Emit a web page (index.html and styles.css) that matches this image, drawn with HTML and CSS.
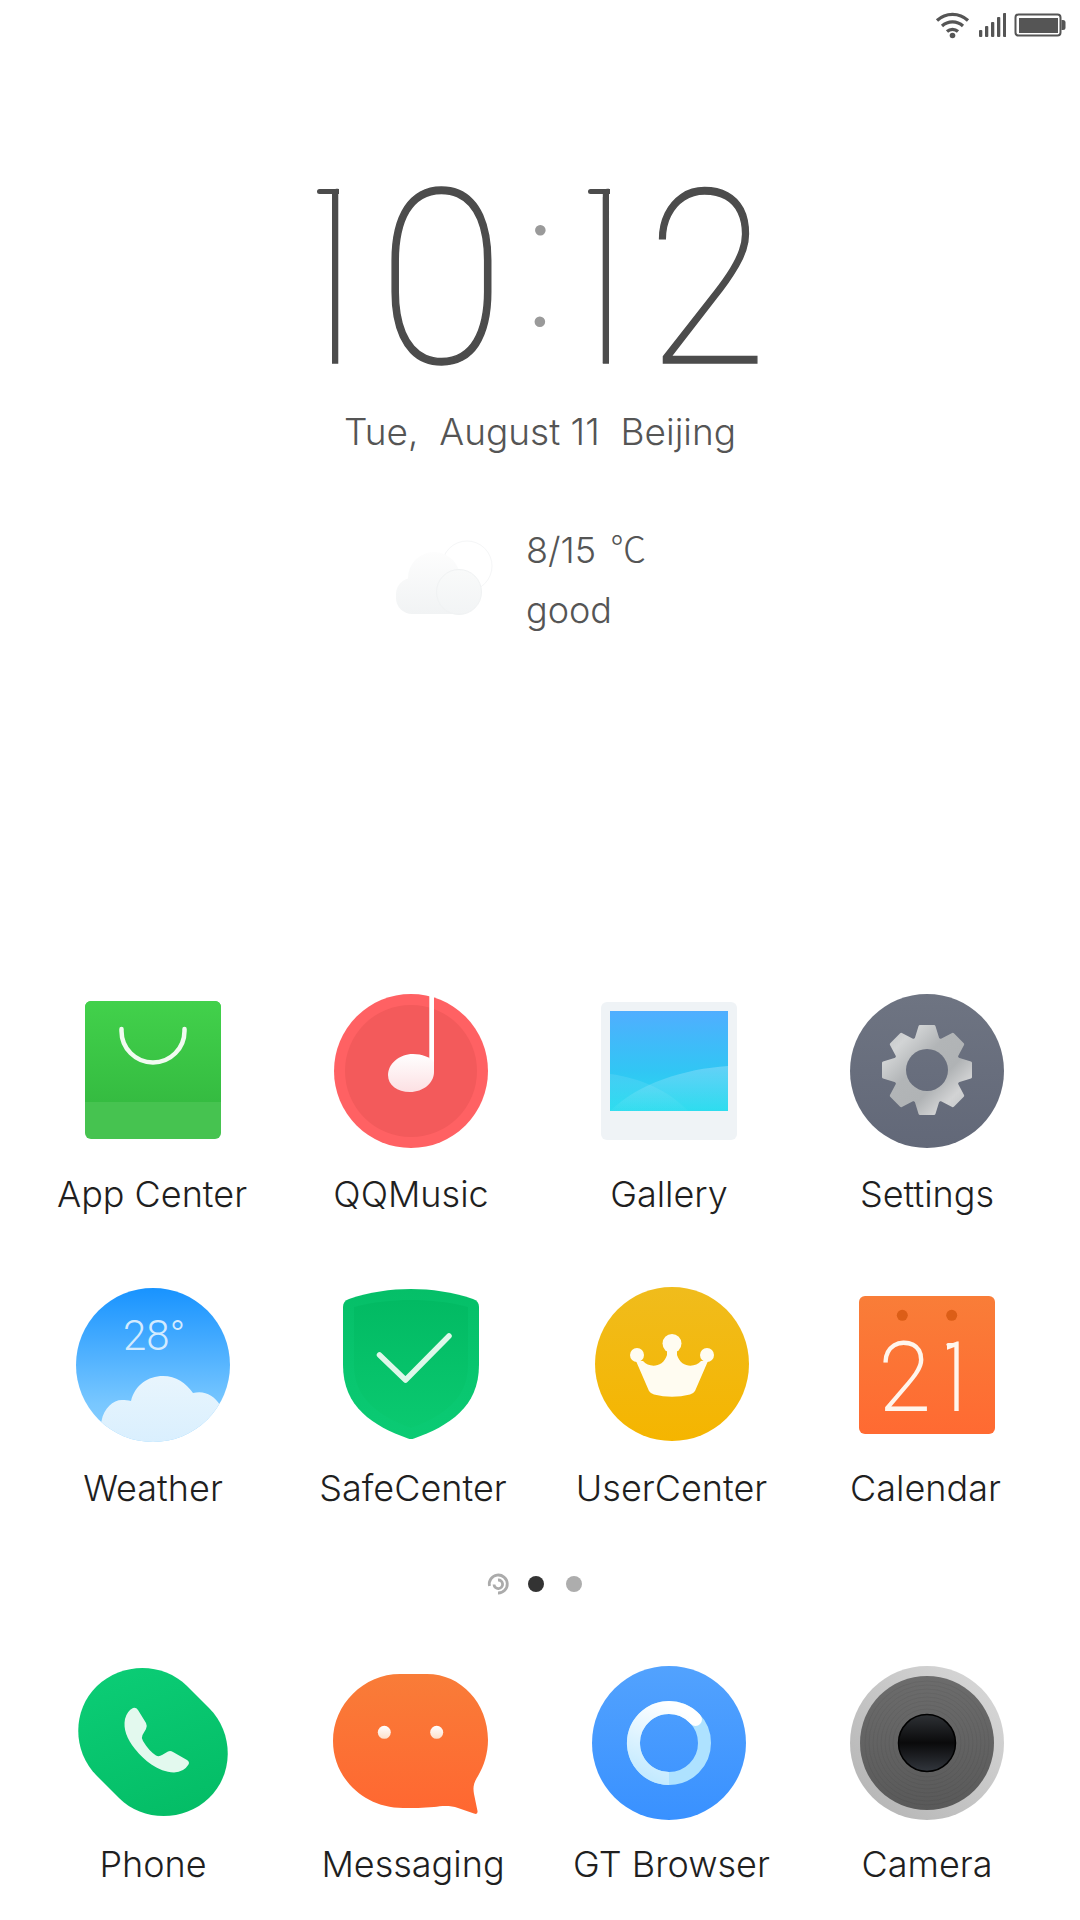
FILE: index.html
```html
<!doctype html>
<html lang="en">
<head>
<meta charset="utf-8">
<title>Home screen</title>
<link rel="stylesheet" href="styles.css">
</head>
<body>
<main class="screen">
  <header class="status">
    <svg class="st-wifi" width="36" height="28" viewBox="0 0 36 28"><g fill="none" stroke="#555" stroke-width="3.2"><path d="M2 9.5a22.5 22.5 0 0 1 31 0"/><path d="M7 15a15.5 15.5 0 0 1 21 0"/><path d="M12 20.5a8 8 0 0 1 11 0"/></g><circle cx="17.5" cy="24.5" r="2.8" fill="#555"/></svg>
    <svg class="st-signal" width="27" height="28" viewBox="0 0 27 28"><g fill="#555"><rect x="0" y="18" width="3.3" height="7" rx="1"/><rect x="6" y="14" width="3.3" height="11" rx="1"/><rect x="12" y="10" width="3.3" height="15" rx="1"/><rect x="18" y="5" width="3.3" height="20" rx="1"/><rect x="24" y="1" width="3.3" height="24" rx="1"/></g></svg>
    <svg class="st-batt" width="52" height="28" viewBox="0 0 52 28"><rect x="1.5" y="2.5" width="45" height="21" rx="3" fill="none" stroke="#555" stroke-width="2"/><rect x="5" y="6" width="39" height="15" fill="#555"/><path d="M47.5 8h1.5a2.5 2.5 0 0 1 2.500 2.500v5a2.500 2.500 0 0 1-2.500 2.500h-1.500z" fill="#555"/></svg>
  </header>

  <section class="clock">
    <span class="digit one"><span class="one-glyph">1</span></span>
    <span class="digit zero">0</span>
    <span class="colon">:</span>
    <span class="digit one second"><span class="one-glyph">1</span></span>
    <span class="digit two">2</span>
  </section>

  <p class="date">Tue,  August 11  Beijing</p>

  <section class="weather">
    <svg class="cloud" width="100" height="80" viewBox="0 0 100 80">
      <defs>
        <linearGradient id="cl" gradientUnits="userSpaceOnUse" x1="0" y1="12" x2="0" y2="74"><stop offset="0" stop-color="#fdfdfd"/><stop offset="1" stop-color="#f1f3f4"/></linearGradient>
        <linearGradient id="clf" x1="0" y1="0" x2="0" y2="1"><stop offset="0" stop-color="#f9fafa"/><stop offset="1" stop-color="#f2f4f5"/></linearGradient>
      </defs>
      <circle cx="71" cy="26" r="25" fill="#fff" stroke="#f5f6f7" stroke-width="1"/>
      <g fill="url(#cl)"><circle cx="38" cy="38" r="26"/><rect x="0" y="38" width="80" height="36" rx="16"/></g>
      <circle cx="63" cy="52" r="22.500" fill="url(#clf)" stroke="#f0f2f3" stroke-width="1"/>
    </svg>
    <div class="weather-text">
      <p>8/15 <span class="celsius">℃</span></p>
      <p>good</p>
    </div>
  </section>

  <section class="grid apps">
    <a class="app">
      <svg class="icon" viewBox="0 0 160 160"><defs>
        <linearGradient id="g1" x1="0" y1="0" x2="0" y2="1"><stop offset="0" stop-color="#42d14b"/><stop offset="1" stop-color="#35bc41"/></linearGradient></defs>
        <rect x="12" y="10" width="136" height="138" rx="6" fill="#46c350"/>
        <path d="M12 16a6 6 0 0 1 6-6h124a6 6 0 0 1 6 6v95H12z" fill="url(#g1)"/>
        <path d="M48.500 38v2a31.500 31.500 0 0 0 63 0v-2" fill="none" stroke="#f1fbf1" stroke-width="4.500" stroke-linecap="round"/>
      </svg>
      <span class="label low">App Center</span>
    </a>
    <a class="app">
      <svg class="icon" viewBox="0 0 160 160"><defs>
        <linearGradient id="g2" x1="0" y1="0" x2="0" y2="1"><stop offset="0" stop-color="#fff"/><stop offset="1" stop-color="#fce0e3"/></linearGradient></defs>
        <circle cx="80" cy="80" r="77" fill="#ff6163"/>
        <circle cx="80" cy="80" r="66" fill="#f35a5b"/>
        <rect x="98.300" y="5" width="4.700" height="76" fill="#fff"/>
        <path d="M103 81c0 11-11 20-24 20c-13 0-22-7-22-17c0-11 11-21 25-21c9 0 17 3 21 8z" fill="url(#g2)"/>
      </svg>
      <span class="label">QQMusic</span>
    </a>
    <a class="app">
      <svg class="icon" viewBox="0 0 160 160"><defs>
        <linearGradient id="g3" x1="0" y1="0" x2="0" y2="1"><stop offset="0" stop-color="#50aeff"/><stop offset=".6" stop-color="#31c6f4"/><stop offset="1" stop-color="#27dcee"/></linearGradient>
        <linearGradient id="g3w" x1="0" y1="0" x2="0" y2="1"><stop offset="0" stop-color="#fff" stop-opacity=".24"/><stop offset="1" stop-color="#fff" stop-opacity=".03"/></linearGradient>
        <linearGradient id="g3v" x1="0" y1="0" x2="0" y2="1"><stop offset="0" stop-color="#fff" stop-opacity=".1"/><stop offset="1" stop-color="#fff" stop-opacity=".03"/></linearGradient></defs>
        <rect x="12" y="11" width="136" height="138" rx="6" fill="#eff3f6"/>
        <rect x="21" y="20" width="118" height="100" fill="url(#g3)"/>
        <path d="M21 83C52 87 80 100 99 120H21z" fill="url(#g3v)"/>
        <path d="M21 120C50 92 95 78 139 75V120z" fill="url(#g3w)"/>
      </svg>
      <span class="label">Gallery</span>
    </a>
    <a class="app">
      <svg class="icon" viewBox="0 0 160 160"><defs>
        <linearGradient id="g4" x1="0" y1="0" x2="0" y2="1"><stop offset="0" stop-color="#6e7482"/><stop offset="1" stop-color="#626878"/></linearGradient>
        <linearGradient id="g4m" x1="0" y1="0" x2="1" y2="1"><stop offset="0" stop-color="#bcbec0"/><stop offset=".22" stop-color="#d2d4d5"/><stop offset=".42" stop-color="#b2b5b7"/><stop offset=".62" stop-color="#b0b3b5"/><stop offset=".78" stop-color="#d2d3d4"/><stop offset="1" stop-color="#bcbec0"/></linearGradient>
        <g id="tooth"><path d="M-7-43.500h14l4 13h-22z" fill="#fff" stroke="#fff" stroke-width="3" stroke-linejoin="round"/></g>
        <mask id="gear" maskUnits="userSpaceOnUse" x="0" y="0" width="160" height="160"><g transform="translate(80 79)">
          <circle r="34" fill="#fff"/>
          <use href="#tooth"/><use href="#tooth" transform="rotate(45)"/><use href="#tooth" transform="rotate(90)"/><use href="#tooth" transform="rotate(135)"/><use href="#tooth" transform="rotate(180)"/><use href="#tooth" transform="rotate(225)"/><use href="#tooth" transform="rotate(270)"/><use href="#tooth" transform="rotate(315)"/>
          <circle r="21" fill="#000"/></g></mask></defs>
        <circle cx="80" cy="80" r="77" fill="url(#g4)"/>
        <rect x="33" y="32" width="94" height="94" fill="url(#g4m)" mask="url(#gear)"/>
      </svg>
      <span class="label">Settings</span>
    </a>

    <a class="app">
      <svg class="icon" viewBox="0 0 160 160"><defs>
        <linearGradient id="g5" x1="0" y1="0" x2="0" y2="1"><stop offset="0" stop-color="#1893ff"/><stop offset=".75" stop-color="#78c7ff"/><stop offset="1" stop-color="#8ad0ff"/></linearGradient>
        <linearGradient id="g5c" x1="0" y1="0" x2="0" y2="1"><stop offset="0" stop-color="#e8f5fd"/><stop offset="1" stop-color="#d9effe"/></linearGradient>
        <clipPath id="c5"><circle cx="80" cy="80" r="77"/></clipPath></defs>
        <circle cx="80" cy="80" r="77" fill="url(#g5)"/>
        <text class="temp" x="50" y="65">28°</text>
        <path clip-path="url(#c5)" d="M20 160L28.500 136C31 123 40 115 49 115C52 115 55 115 58 116C62 100 75 91 90 91C103 91 113 98 120 108C131 105 141 110 147 120L165 160Z" fill="url(#g5c)"/>
      </svg>
      <span class="label">Weather</span>
    </a>
    <a class="app shift-2">
      <svg class="icon" viewBox="0 0 160 160"><defs>
        <linearGradient id="g6" x1="0" y1="0" x2="0" y2="1"><stop offset="0" stop-color="#05bf68"/><stop offset="1" stop-color="#0bcb74"/></linearGradient>
        <linearGradient id="g6i" x1="0" y1="0" x2="0" y2="1"><stop offset="0" stop-color="#02ba63"/><stop offset="1" stop-color="#0ac970"/></linearGradient></defs>
        <path d="M12 22C12 18 14 15.500 18 14C38 7 60 4 80 4C100 4 122 7 142 14C146 15.500 148 18 148 22V80C148 122 118 141 83 153.500Q80 154.500 77 153.500C42 141 12 122 12 80Z" fill="url(#g6)"/>
        <path d="M23 22C42 17 60 15 80 15C100 15 118 17 137 22V80C137 114 112 131 80 143C48 131 23 114 23 80Z" fill="url(#g6i)"/>
        <path d="M48.500 70L74.500 95L118 51" fill="none" stroke="#def8ea" stroke-width="5.500" stroke-linecap="round" stroke-linejoin="round"/>
      </svg>
      <span class="label">SafeCenter</span>
    </a>
    <a class="app shift-3">
      <svg class="icon" viewBox="0 0 160 160"><defs>
        <linearGradient id="g7" x1="0" y1="0" x2="0" y2="1"><stop offset="0" stop-color="#f0bc1c"/><stop offset="1" stop-color="#f5b500"/></linearGradient></defs>
        <g transform="translate(3 0)">
        <circle cx="80" cy="79" r="77" fill="url(#g7)"/>
        <g fill="#fffcf1"><circle cx="80" cy="58.500" r="9.500"/><circle cx="45" cy="70" r="7"/><circle cx="115" cy="70" r="7"/>
        <path d="M44 76L57 106Q59 109 62 109.500Q80 114 98 109.500Q101 109 103 106L116 76L109 76C103 83 89 83 85 70V62H75V70C71 83 57 83 51 76Z"/></g></g>
      </svg>
      <span class="label">UserCenter</span>
    </a>
    <a class="app">
      <svg class="icon" viewBox="0 0 160 160"><defs>
        <linearGradient id="g8" x1="0" y1="0" x2="0" y2="1"><stop offset="0" stop-color="#f97d38"/><stop offset="1" stop-color="#ff6a32"/></linearGradient>
        <clipPath id="c8"><rect x="100" y="40" width="20" height="100"/></clipPath></defs>
        <rect x="12" y="11" width="136" height="138" rx="6" fill="url(#g8)"/>
        <circle cx="55.300" cy="30.300" r="5.500" fill="#dc5e17"/><circle cx="104.700" cy="30.300" r="5.500" fill="#dc5e17"/>
        <text class="cal cal-two" x="32" y="125">2</text>
        <text class="cal" x="80.500" y="125" clip-path="url(#c8)">1</text>
        <path class="cal-flag" d="M101 59.500H107"/>
      </svg>
      <span class="label nudge-left">Calendar</span>
    </a>
  </section>

  <nav class="pager">
    <svg class="spinner" width="22" height="22" viewBox="0 0 22 22"><g fill="none" stroke="#ababab" stroke-width="2.800"><path d="M2.500 13A9 9 0 1 1 11 20"/><path d="M7 11.500A4.300 4.300 0 1 0 11 7"/></g></svg>
    <span class="dot on"></span>
    <span class="dot"></span>
  </nav>

  <section class="grid dock">
    <a class="app">
      <svg class="icon" viewBox="0 0 160 160"><defs>
        <linearGradient id="g9" gradientUnits="userSpaceOnUse" x1="50" y1="4" x2="110" y2="154"><stop offset="0" stop-color="#0bcc75"/><stop offset="1" stop-color="#04bd66"/></linearGradient></defs>
        <path d="M24 113C-1 88-1 47 24 23C49-1 90-1 114 23L136 45C161 70 161 111 136 135C111 159 70 159 46 135Z" fill="url(#g9)"/>
        <path d="M60 45Q63 44 65 47L73 60Q74.500 63 73 66L69.500 72Q68 75 70 78Q76 88 83 92.500Q86 94 89 92L95 88.500Q97.500 87.500 100 89L114 97Q117 99 115.500 101.500Q111 109 101 109.500C85 109 71 97 62 86C54 76 50 66 52 56Q54 48 60 45Z" fill="#e3f9ee"/>
      </svg>
      <span class="label">Phone</span>
    </a>
    <a class="app shift-2">
      <svg class="icon" viewBox="0 0 160 160"><defs>
        <linearGradient id="g10" x1="0" y1="0" x2="0" y2="1"><stop offset="0" stop-color="#f97c38"/><stop offset="1" stop-color="#ff6731"/></linearGradient>
        <linearGradient id="g10d" x1="0" y1="0" x2="0" y2="1"><stop offset="0" stop-color="#fff"/><stop offset="1" stop-color="#fde0cb"/></linearGradient></defs>
        <path d="M69 11H96C130 11 157 40 157 77C157 90 153 103 147 113C142 121 142 125 143 131L146.500 148Q147 152 143 150.500L127 145C119 142 110 143 103 144C92 145 82 145 72 145C33 145 2 115 2 78C2 41 33 11 69 11Z" fill="url(#g10)"/>
        <circle cx="53.300" cy="69.300" r="6.500" fill="url(#g10d)"/><circle cx="105.700" cy="69.300" r="6.500" fill="url(#g10d)"/>
      </svg>
      <span class="label">Messaging</span>
    </a>
    <a class="app shift-3">
      <svg class="icon" viewBox="0 0 160 160"><defs>
        <linearGradient id="g11" x1="0" y1="0" x2="0" y2="1"><stop offset="0" stop-color="#52a2fe"/><stop offset="1" stop-color="#3991ff"/></linearGradient>
        <linearGradient id="g11a" gradientUnits="userSpaceOnUse" x1="85" y1="44" x2="55" y2="112"><stop offset="0" stop-color="#fff"/><stop offset="1" stop-color="#c4eaff"/></linearGradient></defs>
        <circle cx="80" cy="80" r="77" fill="url(#g11)"/>
        <circle cx="80" cy="80" r="35.500" fill="none" stroke="#aee2ff" stroke-width="13"/>
        <path d="M80 115.500A35.500 35.500 0 1 1 106.500 56.500" fill="none" stroke="url(#g11a)" stroke-width="13"/>
        <circle cx="106.500" cy="56.500" r="6.500" fill="#fff"/>
      </svg>
      <span class="label">GT Browser</span>
    </a>
    <a class="app">
      <svg class="icon" viewBox="0 0 160 160"><defs>
        <linearGradient id="g12" x1="0" y1="1" x2="1" y2="0"><stop offset="0" stop-color="#b2b2b2"/><stop offset="1" stop-color="#dadada"/></linearGradient>
        <linearGradient id="g12i" x1="0" y1="0" x2="0" y2="1"><stop offset="0" stop-color="#6c6c6c"/><stop offset="1" stop-color="#595959"/></linearGradient>
        <linearGradient id="g12p" x1="0" y1="0" x2="0" y2="1"><stop offset="0" stop-color="#2e3135"/><stop offset=".5" stop-color="#0a0a0b"/><stop offset="1" stop-color="#32363d"/></linearGradient></defs>
        <circle cx="80" cy="80" r="77" fill="url(#g12)"/>
        <circle cx="80" cy="80" r="67" fill="url(#g12i)"/>
        <g class="rings"><circle cx="80" cy="80" r="34"/><circle cx="80" cy="80" r="38"/><circle cx="80" cy="80" r="42"/><circle cx="80" cy="80" r="46"/><circle cx="80" cy="80" r="50"/><circle cx="80" cy="80" r="54"/><circle cx="80" cy="80" r="58"/><circle cx="80" cy="80" r="62"/></g>
        <circle cx="80" cy="80" r="28.500" fill="url(#g12p)" stroke="#000" stroke-width="1.500"/>
      </svg>
      <span class="label">Camera</span>
    </a>
  </section>
</main>
</body>
</html>
```
FILE: styles.css
```css
* { box-sizing: border-box; }
html, body { margin: 0; padding: 0; background: #fff; }
p { margin: 0; }

.screen {
  width: 1080px;
  height: 1920px;
  overflow: hidden;
  display: flex;
  flex-direction: column;
  background: #fff;
  font-family: Inter, "Noto Sans CJK SC", sans-serif;
  font-weight: 300;
  font-size: 36px;
}

/* status bar */
.status {
  height: 50px;
  padding: 11px 14px 0 0;
  display: flex;
  justify-content: flex-end;
  align-items: flex-start;
}
.st-wifi { margin-right: 8px; }
.st-signal { margin-right: 8px; margin-top: 1px; }
.st-batt { margin-top: 1px; }

/* clock */
.clock {
  margin-top: 110px;
  padding-left: 259px;
  height: 240px;
  display: flex;
  font-family: Roboto, sans-serif;
  font-weight: 100;
  font-size: 244px;
  line-height: 240px;
  color: #4c4c4c;
  -webkit-text-stroke: 1.500px #4c4c4c;
}
.digit { position: relative; display: block; flex: none; }
.one { letter-spacing: -19px; }
.one-glyph { display: block; clip-path: inset(0 0 0 73px); }
.one::before {
  content: "";
  position: absolute;
  left: 58px;
  top: 29px;
  width: 22px;
  height: 5px;
  background: #4c4c4c;
  border-radius: 3px 0 0 3px;
}
.zero { margin-left: 4px; transform: scaleX(.95); transform-origin: left center; }
.colon {
  flex: none;
  margin-top: -20px;
  margin-left: 12px;
  font-size: 195px;
  color: #9a9a9a;
  -webkit-text-stroke: 0;
}
.second { margin-left: -28px; }
.two { margin-left: 3px; transform: scaleX(.9); transform-origin: left center; }

/* date + weather */
.date {
  margin-top: 7px;
  line-height: 50px;
  font-size: 37px;
  text-align: center;
  white-space: pre;
  color: #555;
}
.weather {
  margin-top: 63px;
  padding-left: 396px;
  display: flex;
  align-items: flex-start;
}
.cloud { margin-top: 20px; margin-right: 30px; flex: none; }
.weather-text { height: 120px; line-height: 60px; color: #555; }
.weather-text p { height: 60px; }
.celsius { margin-left: 4px; line-height: 1; font-family: "Noto Sans CJK SC", sans-serif; font-weight: 300; font-size: 36px; }

/* icons */
.grid {
  display: grid;
  grid-template-columns: repeat(4, 258px);
  padding: 0 24px;
}
.apps { margin-top: 351px; row-gap: 66px; }
.app {
  display: flex;
  flex-direction: column;
  align-items: center;
}
.icon { display: block; width: 160px; height: 160px; overflow: visible; }
.label {
  display: block;
  margin-top: 18px;
  line-height: 50px;
  color: #1f1f1f;
  white-space: nowrap;
}
.dock .label { margin-top: 16px; }
.low { margin-right: 2px; }
.shift-2 .label { padding-left: 4px; }
.shift-3 .label { padding-left: 5px; }
.nudge-left { padding-right: 3px; }

/* in-icon details */
.temp { font-family: Roboto, sans-serif; font-weight: 300; font-size: 42px; fill: #d3ebff; }
.cal { font-family: Roboto, sans-serif; font-weight: 100; font-size: 94px; fill: #fff5ec; stroke: #fff5ec; stroke-width: 1.800px; }
.cal-two { letter-spacing: -6px; }
.cal-flag { stroke: #fff5ec; stroke-width: 3.200px; stroke-linecap: round; fill: none; }
.rings circle { fill: none; stroke: #000; stroke-opacity: .05; stroke-width: 1px; }

/* pager */
.pager {
  height: 150px;
  padding: 0 11px 8px 0;
  display: flex;
  justify-content: center;
  align-items: center;
  gap: 22px;
}
.spinner { margin-right: -3px; }
.dot { width: 16px; height: 16px; border-radius: 50%; background: #adadad; }
.dot.on { background: #333; }
```
